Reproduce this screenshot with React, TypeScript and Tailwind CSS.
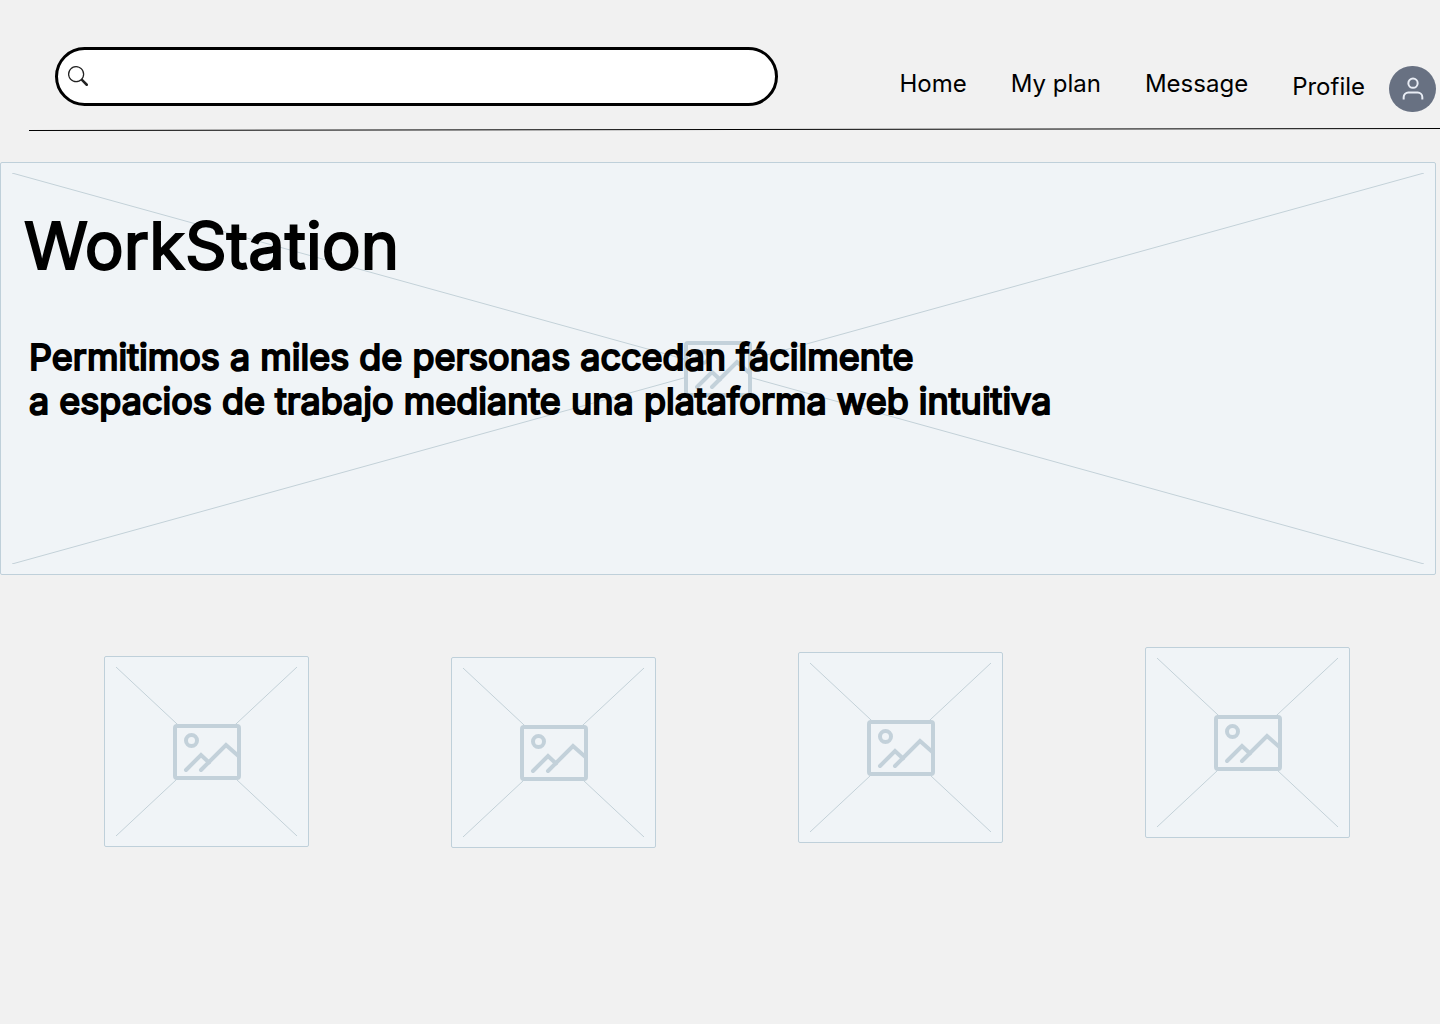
import { BsSearch } from "react-icons/bs";

function ImageGlyph({ className = "" }: { className?: string }) {
  return (
    <svg className={className} width="68" height="56" viewBox="0 0 68 56" fill="none" stroke="#c3d1da" strokeWidth="4">
      <rect x="2" y="2" width="64" height="52" rx="2" fill="#f0f4f7" />
      <circle cx="18.5" cy="16.5" r="5.5" />
      <path d="M13 46L28 31L36 38.5" strokeLinecap="round" />
      <path d="M28 46L53 21L66 32.5" strokeLinecap="round" />
    </svg>
  );
}

/** Crossed-out backdrop with a picture glyph in its centre. */
function PlaceholderArt() {
  return (
    <div aria-hidden="true" className="absolute inset-0 flex items-center justify-center px-[11px] py-[10px]">
      <svg className="h-full w-full" stroke="#c3d1d8" strokeWidth="1">
        <line x1="0" y1="0" x2="100%" y2="100%" />
        <line x1="0" y1="100%" x2="100%" y2="0" />
      </svg>
      <ImageGlyph className="absolute" />
    </div>
  );
}

const links = ["Home", "My plan", "Message"];
const cards = ["mt-[9px]", "mt-[10px]", "mt-[5px]", "mt-0"];

export default function App() {
  return (
    <div className="min-h-screen bg-[#f1f1f1] font-['Inter',sans-serif] text-black">
      <header className="flex items-start pt-[47px] pr-1 pl-[55px]">
        <label className="flex h-[59px] flex-1 items-center rounded-full border-[3px] border-black bg-white pr-6 pb-px pl-[10px]">
          <BsSearch size={20} className="text-[#222]" aria-hidden="true" />
          <input type="search" aria-label="Search" className="ml-3 min-w-0 flex-1 bg-transparent text-xl outline-none" />
        </label>
        <nav className="ml-[121px] flex items-start gap-11 pt-[19px] text-2xl leading-[29px]">
          {links.map((l) => (
            <a key={l} href="#" className="mt-[3px] whitespace-nowrap">
              {l}
            </a>
          ))}
          <a href="#" className="flex items-start gap-6">
            <span className="mt-[6px]">Profile</span>
            <span className="flex h-[46px] w-[47px] items-center justify-center rounded-full bg-[#687182]">
              <svg width="28" height="28" viewBox="0 0 24 24" fill="none" stroke="#e9edf5" strokeWidth="1.7">
                <path d="M20 21v-2a4 4 0 0 0-4-4H8a4 4 0 0 0-4 4v2" />
                <circle cx="12" cy="7" r="4" />
              </svg>
            </span>
          </a>
        </nav>
      </header>

      <div className="mt-[14px] pl-[29px]">
        <svg aria-hidden="true" className="block h-[5px] w-full" stroke="black" strokeWidth="1">
          <line x1="0" y1="4.5" x2="100%" y2="2.5" />
        </svg>
      </div>

      <section className="relative mt-[31px] mr-1 rounded-xs border border-[#bfd0da] bg-[#f0f4f7] pt-11 pb-[151px]">
        <PlaceholderArt />
        <div className="relative">
          <h1 className="pl-[23px] text-[65px] leading-[77px] font-normal [-webkit-text-stroke:2px_black]">WorkStation</h1>
          <p className="mt-[51px] pl-7 text-4xl leading-[44px] [-webkit-text-stroke:2px_black]">
            Permitimos a miles de personas accedan fácilmente
            <br />a espacios de trabajo mediante una plataforma web intuitiva
          </p>
        </div>
      </section>

      <section className="mt-[72px] flex items-start justify-between pr-[90px] pl-[104px]">
        {cards.map((offset) => (
          <div key={offset} className={`relative h-[191px] w-[205px] rounded-xs border border-[#bfd0da] bg-[#f0f4f7] ${offset}`}>
            <PlaceholderArt />
          </div>
        ))}
      </section>
    </div>
  );
}
